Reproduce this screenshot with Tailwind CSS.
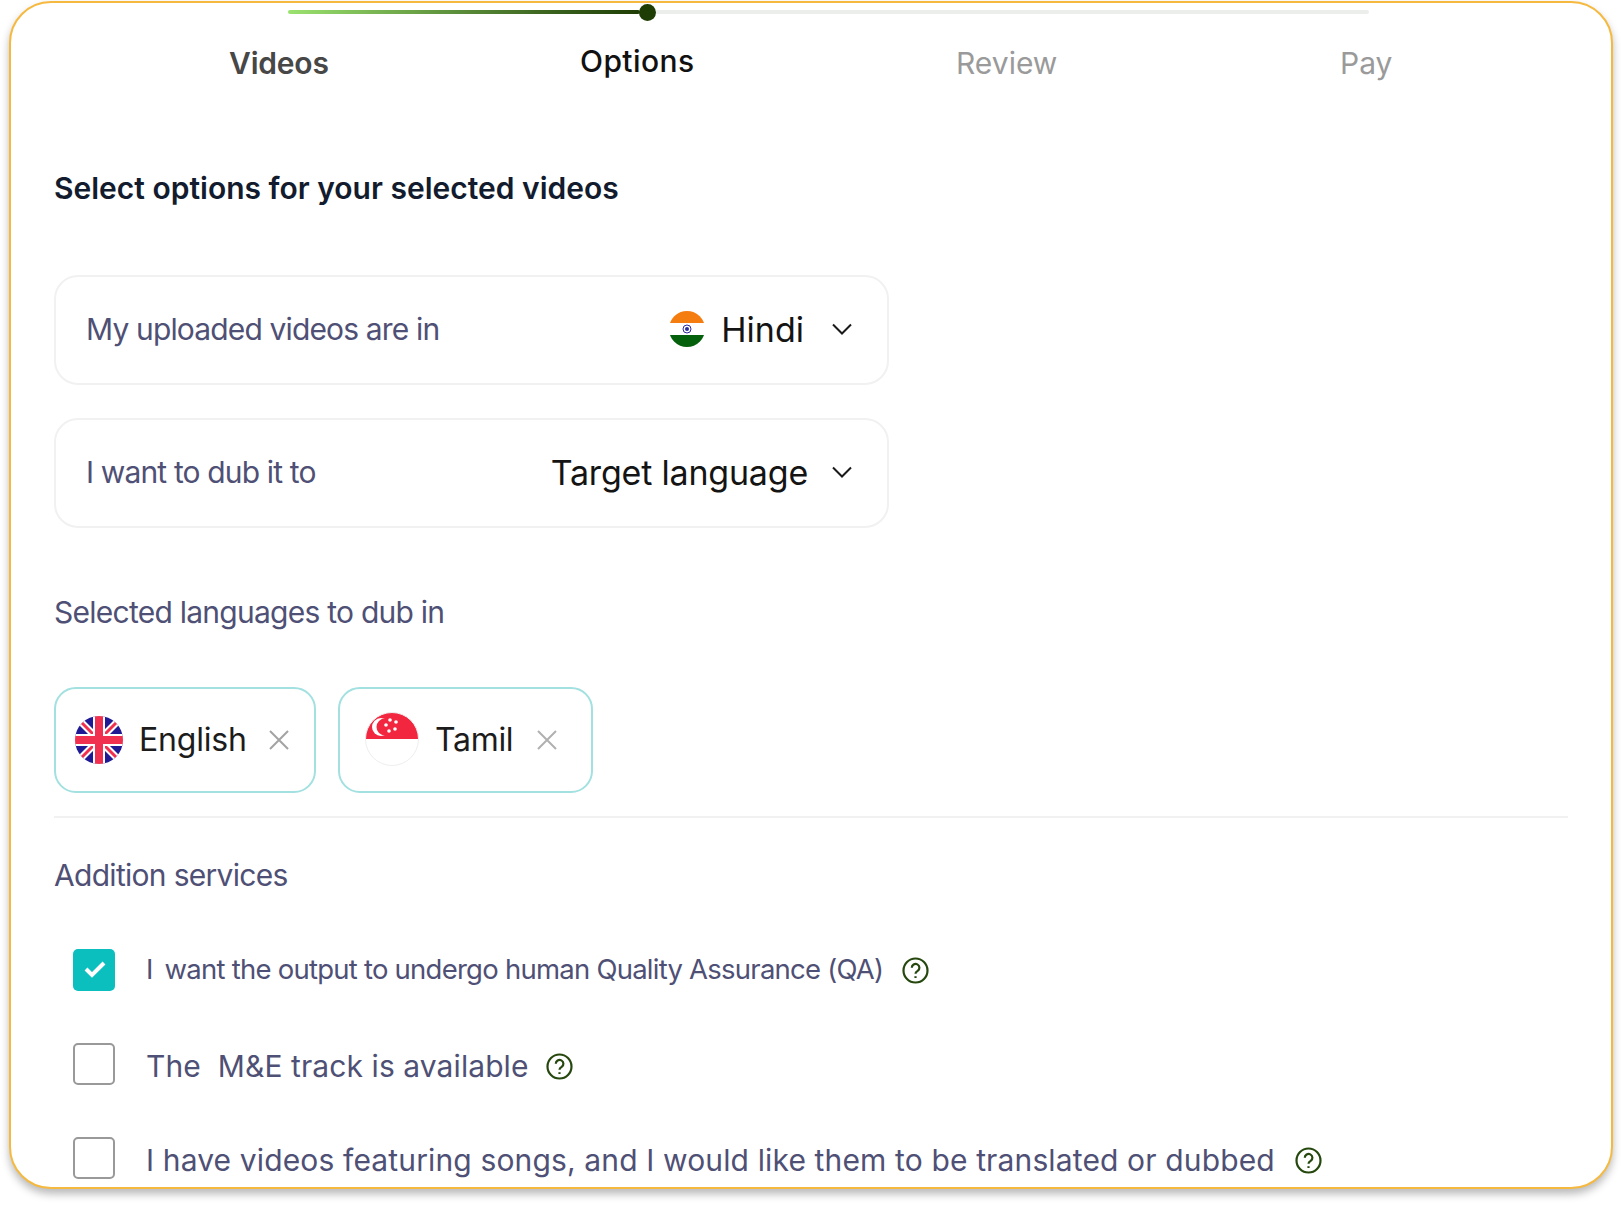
<!DOCTYPE html>
<html lang="en">
<head>
    <meta charset="UTF-8">
    <title>Options</title>
    <script src="https://cdn.jsdelivr.net/npm/@tailwindcss/browser@4"></script>
</head>
<body class="bg-white h-[1205px] overflow-hidden font-['Inter',sans-serif]">
    <div class="ml-[9px] mt-[1px] w-[1604px] h-[1188px] border-2 border-[#f6b93f] rounded-[42px] bg-white shadow-[0_5px_8px_rgba(0,0,0,0.28)] overflow-hidden px-[43px]">
        <!-- Stepper -->
        <div class="flex justify-center -mx-[43px] pt-[1px]">
            <div class="w-[1081px] h-[16px] flex items-center ml-[34px]">
                <div class="w-[352px] h-[4px] rounded-full bg-gradient-to-r from-[#9be26f] to-[#1e3d05]"></div>
                <div class="w-[17px] h-[17px] rounded-full bg-[#1e3d05] -ml-[1px] shrink-0"></div>
                <div class="flex-1 h-[4px] bg-[#eceeec] rounded-r-full"></div>
            </div>
        </div>
        <div class="relative h-[119px] text-[30px] font-medium">
            <span class="absolute left-[175px] top-[21px] text-[#474747] font-semibold -tracking-[0.2px]">Videos</span>
            <span class="absolute left-[526px] top-[19px] text-[#111111] tracking-[0.4px]">Options</span>
            <span class="absolute left-[902px] top-[21px] text-[#9a9a9a] font-normal">Review</span>
            <span class="absolute left-[1286px] top-[21px] text-[#9a9a9a] font-normal">Pay</span>
        </div>

        <h1 class="text-[30px] leading-[40px] font-semibold text-[#131c2e] mt-[29px]">Select options for your selected videos</h1>

        <!-- Language selects -->
        <div class="mt-[67px] w-[835px] flex flex-col gap-[33px]">
            <div class="h-[110px] border-2 border-[#f1f1f1] rounded-[24px] flex items-center pl-[30px] pr-[35px] pb-[2px]">
                <span class="text-[30px] tracking-[-0.85px] text-[#4f5075]">My uploaded videos are in</span>
                <div class="ml-auto flex items-center">
                    <svg class="w-[36px] h-[36px]" viewBox="0 0 36 36"><defs><clipPath id="in"><circle cx="18" cy="18" r="18"/></clipPath></defs><g clip-path="url(#in)"><rect width="36" height="12" fill="#f57c0f"/><rect y="12" width="36" height="12" fill="#fff"/><rect y="24" width="36" height="12" fill="#05600c"/><circle cx="18" cy="18" r="4" fill="none" stroke="#2a2a9c" stroke-width="1"/><circle cx="18" cy="18" r="2" fill="#2a2a9c"/></g></svg>
                    <span class="ml-[16px] text-[34px] text-[#141414]">Hindi</span>
                    <svg class="ml-[28px] w-[20px] h-[12px]" viewBox="0 0 20 12" fill="none" stroke="#1a1a1a" stroke-width="2"><path d="M1 1.5l9 9 9-9"/></svg>
                </div>
            </div>
            <div class="h-[110px] border-2 border-[#f1f1f1] rounded-[24px] flex items-center pl-[30px] pr-[35px] pb-[2px]">
                <span class="text-[30px] tracking-[-0.85px] text-[#4f5075]">I want to dub it to</span>
                <div class="ml-auto flex items-center">
                    <span class="text-[34px] tracking-[-0.2px] text-[#141414]">Target language</span>
                    <svg class="ml-[24px] w-[20px] h-[12px]" viewBox="0 0 20 12" fill="none" stroke="#1a1a1a" stroke-width="2"><path d="M1 1.5l9 9 9-9"/></svg>
                </div>
            </div>
        </div>

        <h2 class="mt-[64px] text-[30px] leading-[40px] tracking-[-0.75px] text-[#4f5075]">Selected languages to dub in</h2>

        <!-- Chips -->
        <div class="mt-[55px] flex gap-[22px]">
            <div class="w-[262px] h-[106px] border-2 border-[#a3e0e0] rounded-[22px] flex items-center pl-[19px]">
                <svg class="w-[48px] h-[48px] shrink-0" viewBox="0 0 48 48"><defs><clipPath id="uk"><circle cx="24" cy="24" r="24"/></clipPath></defs><g clip-path="url(#uk)"><rect width="48" height="48" fill="#1f1a94"/><path d="M0 0L48 48M48 0L0 48" stroke="#fff" stroke-width="7"/><path d="M0 0L48 48M48 0L0 48" stroke="#f0304e" stroke-width="3"/><path d="M24 0V48M0 24H48" stroke="#fff" stroke-width="12"/><path d="M24 0V48M0 24H48" stroke="#f0304e" stroke-width="8"/></g></svg>
                <span class="ml-[16px] text-[32px] tracking-[-0.2px] text-[#1c1c1c]">English</span>
                <svg class="ml-[22px] w-[20px] h-[20px]" viewBox="0 0 20 20" fill="none" stroke="#a3a3a3" stroke-width="2"><path d="M1 1l18 18M19 1L1 19"/></svg>
            </div>
            <div class="w-[255px] h-[106px] border-2 border-[#a3e0e0] rounded-[22px] flex items-center pl-[25px]">
                <svg class="w-[54px] h-[54px] shrink-0 -mt-[3px]" viewBox="0 0 54 54"><defs><clipPath id="sg"><circle cx="27" cy="27" r="26.5"/></clipPath></defs><g clip-path="url(#sg)"><rect width="54" height="27" fill="#f3263f"/><rect y="27" width="54" height="27" fill="#fff"/><circle cx="16" cy="15" r="9" fill="#fff"/><circle cx="20" cy="15" r="8.5" fill="#f3263f"/><g fill="#fff"><circle cx="25" cy="8" r="1.8"/><circle cx="31" cy="10" r="1.8"/><circle cx="30" cy="17" r="1.8"/><circle cx="24" cy="19" r="1.800"/><circle cx="21" cy="13" r="1.8"/></g></g><circle cx="27" cy="27" r="26.5" fill="none" stroke="#eeeeee" stroke-width="1"/></svg>
                <span class="ml-[16px] text-[32px] tracking-[-0.3px] text-[#1c1c1c]">Tamil</span>
                <svg class="ml-[24px] w-[20px] h-[20px]" viewBox="0 0 20 20" fill="none" stroke="#b0b0b0" stroke-width="2"><path d="M1 1l18 18M19 1L1 19"/></svg>
            </div>
        </div>

        <div class="mt-[23px] w-[1514px] h-[2px] bg-[#f1f1f1]"></div>

        <h2 class="mt-[37px] text-[30px] leading-[40px] tracking-[-0.7px] text-[#4f5075]">Addition services</h2>

        <!-- Services -->
        <div class="mt-[54px] pl-[19px] text-[#4f5075]">
            <div class="h-[42px] flex items-center">
                <div class="w-[42px] h-[42px] rounded-[5px] bg-[#0bbfbf] flex items-center justify-center shrink-0">
                    <svg class="w-[22px] h-[18px] -mt-[2px] ml-[1px]" viewBox="0 0 22 18" fill="none" stroke="#fff" stroke-width="4"><path d="M2 9l6 6L20 3"/></svg>
                </div>
                <span class="ml-[31px] text-[27.5px] tracking-[-0.76px] whitespace-pre -mt-[1px]">I  <span class="-ml-[2px]">want the output to undergo human Quality Assurance (QA)</span></span>
                <svg class="ml-[19px] w-[27px] h-[27px]" viewBox="0 0 27 27" fill="none" stroke="#26480e" stroke-width="2.2"><circle cx="13.5" cy="13.5" r="12"/><path d="M9.800 10.800a3.800 3.800 0 1 1 5.900 3.100c-1.400.9-2.200 1.500-2.200 2.900"/><path d="M13.500 19.200v1.800"/></svg>
            </div>
            <div class="mt-[52px] h-[42px] flex items-center">
                <div class="w-[42px] h-[42px] rounded-[5px] border-2 border-[#999999] shrink-0"></div>
                <span class="ml-[31px] mt-[4px] text-[30px] tracking-[0.08px] whitespace-pre">The  M&amp;E track is available</span>
                <svg class="ml-[17px] mt-[4px] w-[27px] h-[27px]" viewBox="0 0 27 27" fill="none" stroke="#26480e" stroke-width="2.2"><circle cx="13.5" cy="13.5" r="12"/><path d="M9.800 10.800a3.800 3.800 0 1 1 5.900 3.100c-1.400.9-2.200 1.500-2.200 2.900"/><path d="M13.500 19.200v1.800"/></svg>
            </div>
            <div class="mt-[52px] h-[42px] flex items-center">
                <div class="w-[42px] h-[42px] rounded-[5px] border-2 border-[#999999] shrink-0"></div>
                <span class="ml-[31px] mt-[5px] text-[30px] tracking-[0.14px] whitespace-pre">I have videos featuring songs, and I would like them to be translated or dubbed</span>
                <svg class="ml-[20px] mt-[5px] w-[27px] h-[27px]" viewBox="0 0 27 27" fill="none" stroke="#26480e" stroke-width="2.2"><circle cx="13.5" cy="13.5" r="12"/><path d="M9.800 10.800a3.800 3.800 0 1 1 5.900 3.100c-1.400.9-2.200 1.500-2.200 2.900"/><path d="M13.500 19.200v1.800"/></svg>
            </div>
        </div>
    </div>
</body>
</html>
